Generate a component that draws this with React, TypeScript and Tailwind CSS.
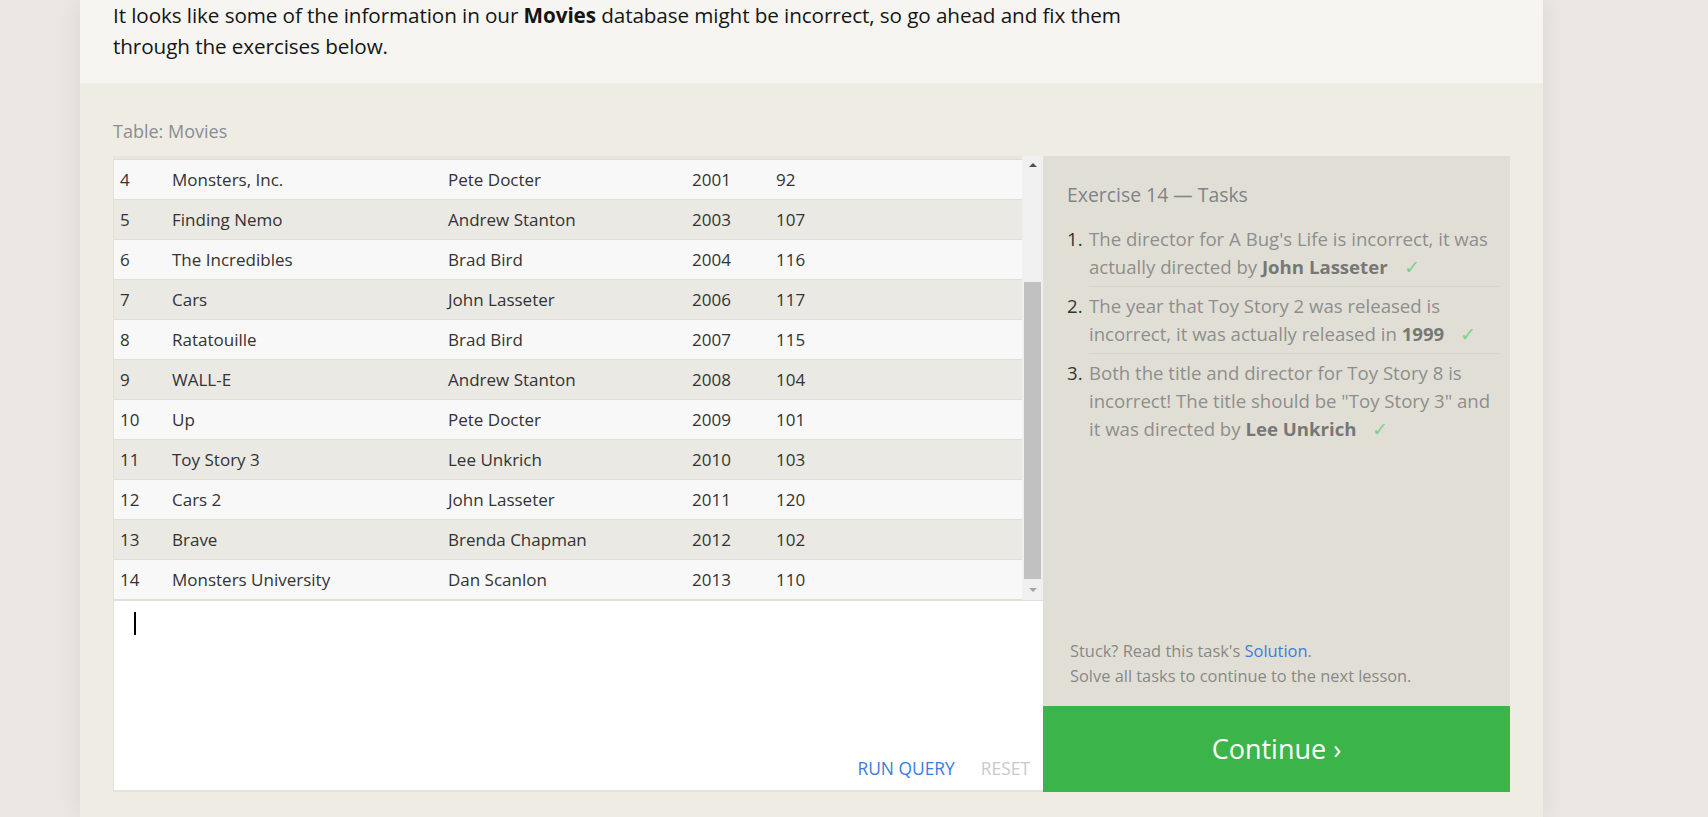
import React from "react";

const rows: [number, string, string, number, number][] = [
  [4, "Monsters, Inc.", "Pete Docter", 2001, 92],
  [5, "Finding Nemo", "Andrew Stanton", 2003, 107],
  [6, "The Incredibles", "Brad Bird", 2004, 116],
  [7, "Cars", "John Lasseter", 2006, 117],
  [8, "Ratatouille", "Brad Bird", 2007, 115],
  [9, "WALL-E", "Andrew Stanton", 2008, 104],
  [10, "Up", "Pete Docter", 2009, 101],
  [11, "Toy Story 3", "Lee Unkrich", 2010, 103],
  [12, "Cars 2", "John Lasseter", 2011, 120],
  [13, "Brave", "Brenda Chapman", 2012, 102],
  [14, "Monsters University", "Dan Scanlon", 2013, 110],
];

function Check() {
  return <span className="ml-[16px] text-[#7fcf8c]">✓</span>;
}

export default function App() {
  return (
    <div
      className="min-h-screen w-full bg-[#ebe6e3] text-[#222]"
      style={{ fontFamily: '"Open Sans", "Noto Sans", sans-serif' }}
    >
      <div className="ml-[80px] w-[1463px] min-h-[817px] flex flex-col bg-[#efece4] shadow-[0_0_22px_rgba(0,0,0,0.07)]">
        {/* Intro text */}
        <div className="bg-[#f6f5f1] pl-[33px] pt-0 pb-[21px] text-[20.7px] leading-[31px] text-[#151515] tracking-[-0.1px]">
          It looks like some of the information in our <b className="font-bold">Movies</b> database might be incorrect, so go ahead and fix them
          <br />
          through the exercises below.
        </div>

        {/* Exercise area */}
        <div className="flex-1 bg-[#efece4] rounded-t-[4px] px-[33px] pt-[36px]">
          <div className="text-[18px] leading-[24px] text-[#8a8d93] mb-[13px]">Table: Movies</div>

          <div className="flex h-[636px]">
            {/* Left: table + editor */}
            <div className="w-[930px] flex flex-col border-l border-[#e4e1d8]">
              <div className="flex h-[445px] border-b border-[#e2e0d9]">
                <div className="flex-1 flex flex-col overflow-hidden">
                  <div className="h-[4px] shrink-0 bg-[#e6e5de] border-b border-[#dedcd5]" />
                  {rows.map((r, i) => (
                    <div
                      key={r[0]}
                      className={`flex items-center h-[40px] shrink-0 border-b border-[#dfded8] text-[17px] text-[#333] ${
                        i % 2 === 0 ? "bg-[#f8f8f8]" : "bg-[#eae9e3]"
                      }`}
                    >
                      <div className="w-[58px] pl-[6px]">{r[0]}</div>
                      <div className="w-[276px]">{r[1]}</div>
                      <div className="w-[244px]">{r[2]}</div>
                      <div className="w-[84px]">{r[3]}</div>
                      <div>{r[4]}</div>
                    </div>
                  ))}
                </div>
                {/* scrollbar */}
                <div className="w-[21px] bg-[#f0f0f0] flex flex-col items-center">
                  <div className="h-[17px] flex items-center justify-center">
                    <div className="w-0 h-0 border-l-[4px] border-r-[4px] border-b-[4px] border-l-transparent border-r-transparent border-b-[#505050]" />
                  </div>
                  <div className="h-[109px]" />
                  <div className="w-[17px] flex-1 bg-[#c1c1c1]" />
                  <div className="h-[21px] flex items-center justify-center">
                    <div className="w-0 h-0 border-l-[4px] border-r-[4px] border-t-[4px] border-l-transparent border-r-transparent border-t-[#a3a3a3]" />
                  </div>
                </div>
              </div>
              <div className="flex-1 bg-white border-b-2 border-[#e6e3db] flex flex-col">
                <div className="ml-[20px] mt-[11px] w-[2px] h-[23px] bg-black" />
                <div className="flex-1" />
                <div className="flex justify-end items-center gap-[26px] pr-[13px] pb-[9px] text-[17.4px]">
                  <span className="text-[#3b7be0]">RUN QUERY</span>
                  <span className="text-[#c9c9c9]">RESET</span>
                </div>
              </div>
            </div>

            {/* Right: tasks */}
            <div className="w-[467px] flex flex-col">
              <div className="flex-1 bg-[#e1dfd5] pl-[24px] pr-[11px] pt-[26px] flex flex-col">
                <div className="text-[19.4px] leading-[26px] text-[#7f838a]">Exercise 14 — Tasks</div>
                <ol className="mt-[17px] text-[18.6px] leading-[28px] text-[#8e8e8e]">
                  <li className="flex">
                    <span className="w-[22px] text-[#333]">1.</span>
                    <div className="flex-1 pb-[5px] border-b border-[#d6d4ca]">
                      The director for A Bug's Life is incorrect, it was
                      <br />
                      actually directed by <b className="text-[#777]">John Lasseter</b>
                      <Check />
                    </div>
                  </li>
                  <li className="flex pt-[5px]">
                    <span className="w-[22px] text-[#333]">2.</span>
                    <div className="flex-1 pb-[5px] border-b border-[#d6d4ca]">
                      The year that Toy Story 2 was released is
                      <br />
                      incorrect, it was actually released in <b className="text-[#777]">1999</b>
                      <Check />
                    </div>
                  </li>
                  <li className="flex pt-[5px]">
                    <span className="w-[22px] text-[#333]">3.</span>
                    <div className="flex-1">
                      Both the title and director for Toy Story 8 is
                      <br />
                      incorrect! The title should be "Toy Story 3" and
                      <br />
                      it was directed by <b className="text-[#777]">Lee Unkrich</b>
                      <Check />
                    </div>
                  </li>
                </ol>
                <div className="flex-1" />
                <div className="pl-[3px] pb-[18px] text-[16.4px] leading-[25px] text-[#888]">
                  Stuck? Read this task's <span className="text-[#3d7ddb]">Solution</span>.
                  <br />
                  Solve all tasks to continue to the next lesson.
                </div>
              </div>
              <div className="h-[86px] bg-[#3bb54a] flex items-center justify-center text-white text-[27px]">
                Continue ›
              </div>
            </div>
          </div>
        </div>
      </div>
    </div>
  );
}
